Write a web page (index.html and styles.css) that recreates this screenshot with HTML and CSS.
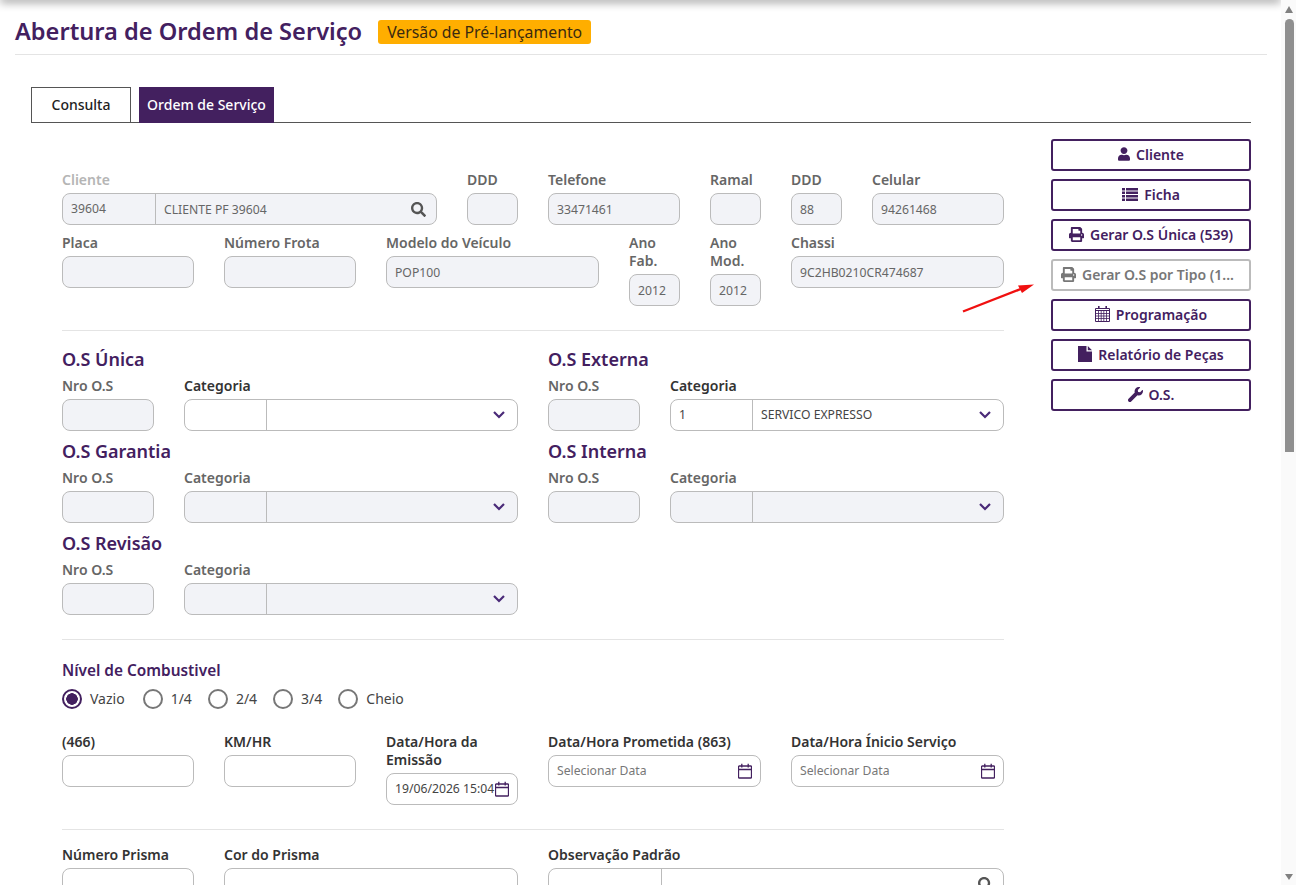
FILE: index.html
```html
<!DOCTYPE html>
<html lang="pt-BR">
<head>
    <meta charset="UTF-8">
    <title>Abertura de Ordem de Serviço</title>
    <link rel="stylesheet" href="styles.css">
</head>
<body>
    <svg class="sprites" width="0" height="0">
        <symbol id="i-cal" viewBox="0 0 14 16"><path d="M1.300 3h11.400a.8.8 0 0 1 .8.8v10.400a.8.8 0 0 1-.8.8H1.300a.8.8 0 0 1-.8-.8V3.800a.8.8 0 0 1 .8-.8zM.5 6.500h13M3.800 .8v3.600M10.200 .8v3.600" fill="none" stroke="currentColor" stroke-width="1.300"/></symbol>
        <symbol id="i-search" viewBox="0 0 512 512"><path fill="currentColor" d="M505 442.700 405.300 343c-4.500-4.500-10.600-7-17-7H372c27.600-35.300 44-79.700 44-128C416 93.100 322.900 0 208 0S0 93.100 0 208s93.100 208 208 208c48.300 0 92.700-16.400 128-44v16.300c0 6.400 2.500 12.500 7 17l99.700 99.700c9.400 9.400 24.600 9.400 33.900 0l28.300-28.300c9.400-9.400 9.400-24.600.1-34zM208 336c-70.700 0-128-57.200-128-128 0-70.700 57.200-128 128-128 70.700 0 128 57.200 128 128 0 70.700-57.200 128-128 128z"/></symbol>
        <symbol id="i-print" viewBox="0 0 512 512"><path fill="currentColor" d="M448 192V77.250c0-8.490-3.370-16.620-9.370-22.630L393.370 9.370c-6-6-14.140-9.370-22.630-9.370H96C78.330 0 64 14.330 64 32v160c-35.350 0-64 28.650-64 64v112c0 8.840 7.160 16 16 16h48v96c0 17.670 14.330 32 32 32h320c17.670 0 32-14.330 32-32v-96h48c8.840 0 16-7.160 16-16V256c0-35.350-28.650-64-64-64zm-64 256H128v-96h256v96zm0-224H128V64h192v48c0 8.840 7.160 16 16 16h48v96zm48 72c-13.250 0-24-10.750-24-24 0-13.270 10.750-24 24-24s24 10.730 24 24c0 13.250-10.750 24-24 24z"/></symbol>
    </svg>

    <div class="top-shadow"></div>

    <main class="page">
        <header class="page-head">
            <h1>Abertura de Ordem de Serviço</h1>
            <span class="badge">Versão de Pré-lançamento</span>
        </header>

        <nav class="tabs">
            <a class="tab">Consulta</a>
            <a class="tab active">Ordem de Serviço</a>
        </nav>

        <div class="content">
            <form class="form">
                <!-- dados do cliente -->
                <div class="row">
                    <div class="field w-client">
                        <label class="muted">Cliente</label>
                        <div class="input split ro">
                            <span class="code">39604</span>
                            <span class="desc">CLIENTE PF 39604</span>
                            <svg class="ico-search"><use href="#i-search"/></svg>
                        </div>
                    </div>
                    <div class="field w-s"><label class="ro-l">DDD</label><div class="input ro"></div></div>
                    <div class="field w-m"><label class="ro-l">Telefone</label><div class="input ro">33471461</div></div>
                    <div class="field w-s"><label class="ro-l">Ramal</label><div class="input ro"></div></div>
                    <div class="field w-s"><label class="ro-l">DDD</label><div class="input ro">88</div></div>
                    <div class="field w-m"><label class="ro-l">Celular</label><div class="input ro">94261468</div></div>
                </div>
                <div class="row">
                    <div class="field w-m"><label class="ro-l">Placa</label><div class="input ro"></div></div>
                    <div class="field w-m"><label class="ro-l">Número Frota</label><div class="input ro"></div></div>
                    <div class="field w-model"><label class="ro-l">Modelo do Veículo</label><div class="input ro">POP100</div></div>
                    <div class="field w-s"><label class="ro-l">Ano Fab.</label><div class="input ro">2012</div></div>
                    <div class="field w-s"><label class="ro-l">Ano Mod.</label><div class="input ro">2012</div></div>
                    <div class="field w-chassi"><label class="ro-l">Chassi</label><div class="input ro">9C2HB0210CR474687</div></div>
                </div>

                <hr class="sep">

                <!-- tipos de O.S -->
                <div class="os-grid">
                    <section class="os">
                        <h2>O.S Única</h2>
                        <div class="os-fields">
                            <div class="field w-nro"><label class="ro-l">Nro O.S</label><div class="input ro"></div></div>
                            <div class="field w-cat"><label>Categoria</label>
                                <div class="input split"><span class="code code-cat"></span><span class="desc"></span><svg class="chev" viewBox="0 0 14 10"><path d="M2 2l5 5 5-5"/></svg></div>
                            </div>
                        </div>
                    </section>
                    <section class="os">
                        <h2>O.S Externa</h2>
                        <div class="os-fields">
                            <div class="field w-nro"><label class="ro-l">Nro O.S</label><div class="input ro"></div></div>
                            <div class="field w-cat"><label>Categoria</label>
                                <div class="input split"><span class="code code-cat">1</span><span class="desc desc-up">SERVICO EXPRESSO</span><svg class="chev" viewBox="0 0 14 10"><path d="M2 2l5 5 5-5"/></svg></div>
                            </div>
                        </div>
                    </section>
                    <section class="os">
                        <h2>O.S Garantia</h2>
                        <div class="os-fields">
                            <div class="field w-nro"><label class="ro-l">Nro O.S</label><div class="input ro"></div></div>
                            <div class="field w-cat"><label class="ro-l">Categoria</label>
                                <div class="input split ro"><span class="code code-cat"></span><span class="desc"></span><svg class="chev" viewBox="0 0 14 10"><path d="M2 2l5 5 5-5"/></svg></div>
                            </div>
                        </div>
                    </section>
                    <section class="os">
                        <h2>O.S Interna</h2>
                        <div class="os-fields">
                            <div class="field w-nro"><label class="ro-l">Nro O.S</label><div class="input ro"></div></div>
                            <div class="field w-cat"><label class="ro-l">Categoria</label>
                                <div class="input split ro"><span class="code code-cat"></span><span class="desc"></span><svg class="chev" viewBox="0 0 14 10"><path d="M2 2l5 5 5-5"/></svg></div>
                            </div>
                        </div>
                    </section>
                    <section class="os">
                        <h2>O.S Revisão</h2>
                        <div class="os-fields">
                            <div class="field w-nro"><label class="ro-l">Nro O.S</label><div class="input ro"></div></div>
                            <div class="field w-cat"><label class="ro-l">Categoria</label>
                                <div class="input split ro"><span class="code code-cat"></span><span class="desc"></span><svg class="chev" viewBox="0 0 14 10"><path d="M2 2l5 5 5-5"/></svg></div>
                            </div>
                        </div>
                    </section>
                </div>

                <hr class="sep sep-fuel">

                <!-- combustivel -->
                <h3 class="fuel-title">Nível de Combustivel</h3>
                <div class="radios">
                    <label class="radio checked"><i></i>Vazio</label>
                    <label class="radio"><i></i>1/4</label>
                    <label class="radio"><i></i>2/4</label>
                    <label class="radio"><i></i>3/4</label>
                    <label class="radio"><i></i>Cheio</label>
                </div>

                <div class="row row-dates">
                    <div class="field w-m"><label>(466)</label><div class="input"></div></div>
                    <div class="field w-m"><label>KM/HR</label><div class="input"></div></div>
                    <div class="field w-m"><label>Data/Hora da Emissão</label>
                        <div class="input date">19/06/2026 15:04<svg class="ico-cal"><use href="#i-cal"/></svg></div>
                    </div>
                    <div class="field w-date"><label>Data/Hora Prometida (863)</label>
                        <div class="input date ph">Selecionar Data<svg class="ico-cal"><use href="#i-cal"/></svg></div>
                    </div>
                    <div class="field w-date"><label>Data/Hora Ínicio Serviço</label>
                        <div class="input date ph">Selecionar Data<svg class="ico-cal"><use href="#i-cal"/></svg></div>
                    </div>
                </div>

                <hr class="sep">

                <div class="row row-prisma">
                    <div class="field w-m"><label>Número Prisma</label><div class="input"></div></div>
                    <div class="field w-cor"><label>Cor do Prisma</label><div class="input"></div></div>
                    <div class="field w-obs"><label>Observação Padrão</label>
                        <div class="input split"><span class="code code-obs"></span><span class="desc"></span><svg class="ico-search"><use href="#i-search"/></svg></div>
                    </div>
                </div>
            </form>

            <aside class="actions">
                <button class="btn" type="button">
                    <svg class="ic-user" viewBox="0 0 448 512"><path fill="currentColor" d="M224 256c70.700 0 128-57.300 128-128S294.700 0 224 0 96 57.300 96 128s57.300 128 128 128zm89.600 32h-16.700c-22.200 10.200-46.900 16-72.900 16s-50.600-5.800-72.900-16h-16.700C60.200 288 0 348.200 0 422.400V464c0 26.500 21.500 48 48 48h352c26.500 0 48-21.500 48-48v-41.600c0-74.200-60.200-134.400-134.400-134.400z"/></svg>
                    Cliente
                </button>
                <button class="btn" type="button">
                    <svg class="ic-list" viewBox="0 0 16 13"><path fill="currentColor" d="M0 0h3v2.400H0zM4 0h12v2.400H4zM0 3.500h3v2.400H0zM4 3.500h12v2.400H4zM0 7h3v2.400H0zM4 7h12v2.400H4zM0 10.500h3V13H0zM4 10.500h12V13H4z"/></svg>
                    Ficha
                </button>
                <button class="btn" type="button"><svg class="ic-print"><use href="#i-print"/></svg>Gerar O.S Única (539)</button>
                <button class="btn disabled" type="button"><svg class="ic-print"><use href="#i-print"/></svg><span>Gerar O.S por Tipo (1...</span></button>
                <button class="btn" type="button">
                    <svg class="ic-grid" viewBox="0 0 15 16"><path fill="currentColor" d="M3 0h1.600v3H3zM10.400 0H12v3h-1.600z"/><path d="M.5 2.500h14v13H.5zM.5 4.500h14" fill="none" stroke="currentColor"/><path d="M3.500 5v10M6.200 5v10M8.800 5v10M11.500 5v10M1 7.500h13M1 10h13M1 12.500h13" fill="none" stroke="currentColor" stroke-width=".8"/></svg>
                    Programação
                </button>
                <button class="btn" type="button">
                    <svg class="ic-file" viewBox="0 0 14 16"><path fill="currentColor" d="M0 0h8.500v5.500H14V16H0zM9.800 0 14 4.200H9.800z"/></svg>
                    Relatório de Peças
                </button>
                <button class="btn" type="button">
                    <svg class="ic-wrench" viewBox="0 0 512 512"><path fill="currentColor" d="M507.700 109.100c-2.200-9-13.500-12.100-20.100-5.500l-74.400 74.400-67.900-11.300-11.300-67.900 74.400-74.400c6.600-6.600 3.400-17.900-5.700-20.200-47.400-11.700-99.500.9-136.600 38-39.700 39.700-50.900 97.100-34.900 147L18.700 402.800c-25 25-25 65.500 0 90.500 25 25 65.500 25 90.500 0l213.200-213.200c49.900 16.100 107.300 4.800 147.100-35 37.100-37.100 49.700-89.300 38.200-136z"/></svg>
                    O.S.
                </button>
            </aside>
        </div>
    </main>

    <!-- seta desenhada por cima da tela -->
    <svg class="arrow" width="80" height="40" viewBox="0 0 80 40"><path d="M3 31.500 L62 8.500" stroke="#f01010" stroke-width="2.400" fill="none"/><path d="M74 4.500 L58 5.500 L62 13z" fill="#f01010"/></svg>

    <div class="scrollbar">
        <span class="sb-up"></span>
        <div class="sb-track"><div class="sb-thumb"></div></div>
        <span class="sb-down"></span>
    </div>
</body>
</html>
```
FILE: styles.css
```css
* {
    box-sizing: border-box;
}

html, body {
    margin: 0;
    height: 100%;
    overflow: hidden;
}

body {
    background: #fff;
    color: #333;
    font-family: "Noto Sans", "Open Sans", sans-serif;
    font-size: 14px;
}

.sprites {
    position: absolute;
}

.top-shadow {
    position: absolute;
    top: -6px;
    left: 0;
    width: 1281px;
    height: 6px;
    box-shadow: 0 2px 10px rgba(0, 0, 0, .45);
}

.page {
    width: 1281px;
    height: 885px;
    padding: 0 14px 0 15px;
    overflow: hidden;
}

/* cabecalho */
.page-head {
    display: flex;
    align-items: center;
    gap: 16px;
    height: 55px;
    padding-top: 9px;
    border-bottom: 1px solid #e4e4e4;
}

.page-head h1 {
    margin: 0 0 2px;
    font-size: 23.600px;
    font-weight: 600;
    color: #43205f;
    white-space: nowrap;
}

.badge {
    background: #ffae00;
    color: #3a2a10;
    border-radius: 3px;
    font-size: 15.800px;
    line-height: 24px;
    height: 24px;
    padding: 0 9px;
    white-space: nowrap;
}

/* abas */
.tabs {
    display: flex;
    gap: 8px;
    height: 36px;
    margin: 32px 16px 0;
    border-bottom: 1px solid #555;
}

.tab {
    display: flex;
    align-items: center;
    justify-content: center;
    width: 100px;
    height: 36px;
    padding-bottom: 2px;
    border: 1px solid #555;
    background: #fff;
    color: #222;
    font-size: 14px;
    font-weight: 500;
}

.tab.active {
    width: 135px;
    border-color: #43205f;
    background: #43205f;
    color: #fff;
}

.content {
    display: flex;
    margin: 16px 0 0 47px;
}

.form {
    width: 942px;
    flex: none;
    padding-top: 23px;
}

.row {
    display: flex;
    gap: 30px;
}

.field {
    display: flex;
    flex-direction: column;
    flex: none;
}

.field label {
    padding: 9px 0 4px;
    font-size: 14px;
    line-height: 18px;
    font-weight: 600;
    color: #333;
}

.field label.ro-l {
    color: #666;
}

.field label.muted {
    color: #b5b5b5;
}

.input {
    display: flex;
    align-items: center;
    height: 32px;
    padding: 0 8px;
    border: 1px solid #bbb;
    border-radius: 8px;
    background: #fff;
    color: #444;
    font-size: 12.200px;
    white-space: nowrap;
}

.input.ro {
    background: #f2f3f7;
    color: #666;
}

.split {
    padding: 0;
}

.split .code {
    width: 93px;
    flex: none;
    padding-left: 8px;
    line-height: 30px;
    height: 30px;
    border-right: 1px solid #bbb;
}

.split .code-cat {
    width: 82px;
}

.split .code-obs {
    width: 113px;
}

.split .desc {
    flex: 1;
    padding-left: 8px;
}

.split .desc-up {
    padding-bottom: 2px;
}

.ico-search {
    width: 15px;
    height: 15px;
    flex: none;
    margin-right: 10px;
    color: #555;
}

.chev {
    width: 14px;
    height: 10px;
    flex: none;
    margin-right: 11px;
    fill: none;
    stroke: #4a2a78;
    stroke-width: 2.200;
}

.w-client { width: 375px; }
.w-s { width: 51px; }
.w-m { width: 132px; }
.w-model { width: 213px; }
.w-chassi { width: 213px; }
.w-nro { width: 92px; }
.w-cat { width: 334px; }
.w-date { width: 213px; }
.w-cor { width: 294px; }
.w-obs { width: 456px; }

.sep {
    height: 1px;
    margin: 24px 0 0;
    border: 0;
    background: #e4e4e4;
}

.sep-fuel {
    margin-top: 16px;
}

/* tipos de O.S */
.os-grid {
    display: grid;
    grid-template-columns: 456px 456px;
    column-gap: 30px;
    margin-top: 16px;
}

.os {
    height: 92px;
}

.os h2 {
    margin: 0;
    height: 26px;
    font-size: 18px;
    line-height: 24px;
    font-weight: 600;
    color: #43205f;
}

.os-fields {
    display: flex;
    gap: 30px;
}

.os .field label {
    padding-top: 4px;
}

/* combustivel */
.fuel-title {
    margin: 20px 0 0;
    font-size: 15.400px;
    line-height: 22px;
    font-weight: 600;
    color: #43205f;
}

.radios {
    display: flex;
    gap: 16px;
    margin-top: 6px;
}

.radio {
    display: flex;
    align-items: center;
    gap: 8px;
    height: 22px;
    padding-bottom: 2px;
    font-size: 14px;
    color: #444;
}

.radio.checked {
    padding-right: 2px;
}

.radio i {
    width: 20px;
    height: 20px;
    margin-top: 2px;
    border: 2px solid #777;
    border-radius: 50%;
}

.radio.checked i {
    border-color: #43205f;
    background: radial-gradient(circle, #43205f 0 5.500px, #fff 6px);
}

.row-dates {
    margin-top: 14px;
}

.row-prisma {
    margin-top: 7px;
}

.date {
    justify-content: space-between;
    padding-bottom: 2px;
}

.date.ph {
    color: #777;
}

.ico-cal {
    width: 14px;
    height: 16px;
    flex: none;
    margin-top: 2px;
    color: #43205f;
}

/* botoes da direita */
.actions {
    display: flex;
    flex-direction: column;
    gap: 8px;
    width: 200px;
    margin-left: 47px;
}

.btn {
    display: flex;
    align-items: center;
    justify-content: center;
    gap: 6px;
    width: 200px;
    height: 32px;
    padding: 0 6px 2px;
    border: 2px solid #43205f;
    border-radius: 3px;
    background: #fff;
    color: #43205f;
    font-family: inherit;
    font-size: 14px;
    font-weight: 600;
    white-space: nowrap;
}

.btn svg {
    flex: none;
}

.ic-user { width: 12px; height: 14px; }
.ic-list { width: 16px; height: 13px; }
.ic-print { width: 15px; height: 15px; }
.ic-grid { width: 15px; height: 16px; }
.ic-file { width: 14px; height: 16px; }
.ic-wrench { width: 15px; height: 15px; }

.btn.disabled {
    justify-content: flex-start;
    padding-left: 8px;
    border-color: #bbb;
    color: #777;
}

.arrow {
    position: absolute;
    left: 960px;
    top: 280px;
}

/* barra de rolagem */
.scrollbar {
    position: absolute;
    top: 0;
    right: 0;
    display: flex;
    flex-direction: column;
    width: 15px;
    height: 885px;
    background: #fafafa;
}

.sb-up, .sb-down {
    height: 15px;
    flex: none;
    position: relative;
}

.sb-up::after, .sb-down::after {
    content: "";
    position: absolute;
    left: 4px;
    width: 0;
    height: 0;
    border-left: 4.500px solid transparent;
    border-right: 4.500px solid transparent;
}

.sb-up::after {
    top: 6px;
    border-bottom: 7px solid #808080;
}

.sb-down::after {
    top: 4px;
    border-top: 6px solid #808080;
}

.sb-track {
    flex: 1;
    padding: 4px 2px 0 4px;
}

.sb-thumb {
    height: 433px;
    border-radius: 5px 5px 0 0;
    background: #8f8f8f;
}
```
